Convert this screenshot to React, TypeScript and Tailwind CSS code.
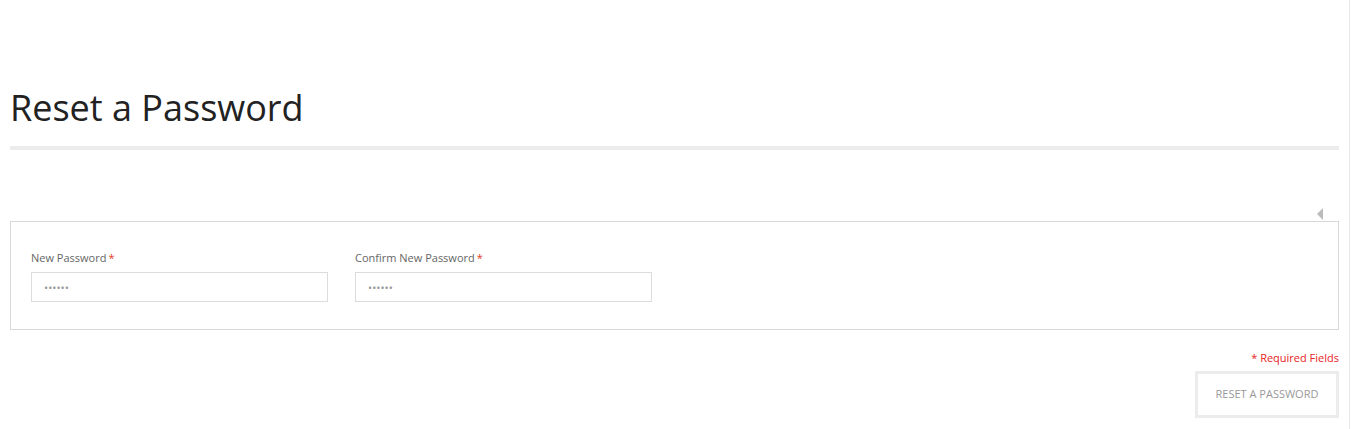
export default function App() {
  const font = { fontFamily: '"Open Sans", "Liberation Sans", sans-serif' };
  return (
    <div className="min-h-[429px] w-[1350px] border-r border-[#e8e8e8] bg-white" style={font}>
      <div className="px-[10px] pt-[84px]">
        <h1 className="text-[36px] font-normal leading-[48px] text-[#222]">Reset a Password</h1>
        <div className="mt-[14px] h-[4px] bg-[#ececec]" />

        <div className="mt-[58px] flex justify-end pr-[16px]">
          <span className="h-0 w-0 border-y-[6px] border-r-[6px] border-y-transparent border-r-[#bbb]" />
        </div>
        <div className="mt-[1px] border border-[#d9d9d9] px-[20px] pb-[27px] pt-[28px]">
          <div className="flex gap-[27px]">
            <label className="flex w-[297px] flex-col">
              <span className="text-[11px] leading-[15px] text-[#666]">
                New Password<span className="ml-[2px] text-[#e23b1e]">*</span>
              </span>
              <input
                type="password"
                placeholder="••••••"
                className="mt-[7px] h-[30px] border border-[#dcdcdc] px-[12px] text-[11px] text-[#666] placeholder:text-[#999] outline-none"
              />
            </label>
            <label className="flex w-[297px] flex-col">
              <span className="text-[11px] leading-[15px] text-[#666]">
                Confirm New Password<span className="ml-[2px] text-[#e23b1e]">*</span>
              </span>
              <input
                type="password"
                placeholder="••••••"
                className="mt-[7px] h-[30px] border border-[#dcdcdc] px-[12px] text-[11px] text-[#666] placeholder:text-[#999] outline-none"
              />
            </label>
          </div>
        </div>

        <div className="mt-[20px] flex flex-col items-end">
          <p className="text-[11px] leading-[15px] text-[#e8231b]">* Required Fields</p>
          <button className="mt-[6px] h-[47px] w-[144px] border-[3px] border-[#ececec] bg-white text-[11px] uppercase text-[#999]">
            Reset a Password
          </button>
        </div>
      </div>
    </div>
  );
}
